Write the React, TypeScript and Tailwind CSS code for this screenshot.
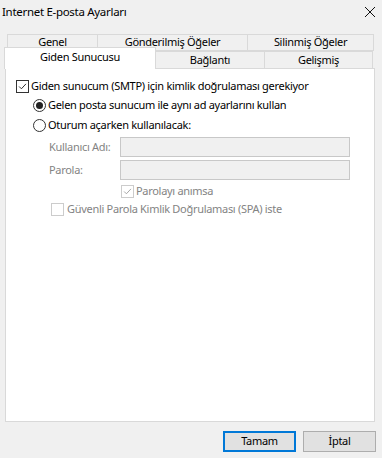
import React from 'react'

const Check = ({ color }: { color: string }) => (
  <svg width="13" height="13" viewBox="0 0 13 13" className="block">
    <path d="M2.5 6.5 L5.2 9.2 L10.6 3.4" fill="none" stroke={color} strokeWidth="1.1" />
  </svg>
)

const Checkbox = ({ checked, disabled }: { checked?: boolean; disabled?: boolean }) => (
  <span
    className={`flex h-[13px] w-[13px] shrink-0 items-center justify-center border bg-white ${
      disabled ? 'border-[#cccccc]' : 'border-[#333333]'
    }`}
  >
    {checked && <Check color={disabled ? '#a0a0a0' : '#222222'} />}
  </span>
)

const Radio = ({ checked }: { checked?: boolean }) => (
  <span className="flex h-[13px] w-[13px] shrink-0 items-center justify-center rounded-full border border-[#333333] bg-white">
    {checked && <span className="h-[7px] w-[7px] rounded-full bg-[#222222]" />}
  </span>
)

const Tab = ({ label, width }: { label: string; width: string }) => (
  <div
    className={`flex h-full items-center justify-center border border-l-0 border-[#d9d9d9] bg-[#f0f0f0] ${width}`}
  >
    {label}
  </div>
)

export default function App() {
  return (
    <div
      className="flex h-[458px] w-[382px] flex-col bg-[#f0f0f0] text-[11px] tracking-[-0.3px] text-black"
      style={{ fontFamily: '"Segoe UI", "Noto Sans", sans-serif' }}
    >
      {/* Title bar */}
      <div className="flex h-[24px] items-center justify-between pl-[2px] pr-[6px]">
        <span className="text-[11.5px]">Internet E-posta Ayarları</span>
        <svg width="12" height="12" viewBox="0 0 12 12">
          <path d="M1 1 L11 11 M11 1 L1 11" stroke="#111" strokeWidth="1" />
        </svg>
      </div>

      {/* Tabs */}
      <div className="ml-[5px] mt-[10px] w-[370px]">
        <div className="ml-[2px] flex h-[17px] border-l border-[#d9d9d9]">
          <Tab label="Genel" width="w-[90px]" />
          <Tab label="Gönderilmiş Öğeler" width="w-[150px]" />
          <Tab label="Silinmiş Öğeler" width="w-[126px]" />
        </div>
        <div className="flex h-[18px] items-end">
          <div className="relative z-10 -ml-[1px] -mt-[3px] flex h-[22px] w-[152px] items-start justify-center border border-b-0 border-[#d9d9d9] bg-white pt-[1px]">
            Giden Sunucusu
          </div>
          <Tab label="Bağlantı" width="w-[109px]" />
          <Tab label="Gelişmiş" width="w-[108px]" />
        </div>

        {/* Panel */}
        <div className="-mt-px flex h-[354px] flex-col border border-[#d9d9d9] bg-white pl-[10px] pt-[10px]">
          <label className="flex h-[14px] items-center gap-[2px]">
            <Checkbox checked />
            <span>Giden sunucum (SMTP) için kimlik doğrulaması gerekiyor</span>
          </label>
          <label className="ml-[17px] mt-[5px] flex h-[14px] items-center gap-[2px]">
            <Radio checked />
            <span>Gelen posta sunucum ile aynı ad ayarlarını kullan</span>
          </label>
          <label className="ml-[17px] mt-[6px] flex h-[14px] items-center gap-[2px]">
            <Radio />
            <span>Oturum açarken kullanılacak:</span>
          </label>

          <div className="mt-[5px] flex items-center text-[#838383]">
            <span className="w-[104px] whitespace-nowrap pl-[33px]">Kullanıcı Adı:</span>
            <div className="h-[20px] w-[230px] border border-[#c8c8c8] bg-[#f0f0f0]" />
          </div>
          <div className="mt-[3px] flex items-center text-[#838383]">
            <span className="w-[104px] whitespace-nowrap pl-[33px]">Parola:</span>
            <div className="h-[20px] w-[230px] border border-[#c8c8c8] bg-[#f0f0f0]" />
          </div>
          <label className="ml-[105px] mt-[4px] flex h-[14px] items-center gap-[2px] text-[#838383]">
            <Checkbox checked disabled />
            <span>Parolayı anımsa</span>
          </label>
          <label className="ml-[35px] mt-[4px] flex h-[14px] items-center gap-[3px] text-[#838383]">
            <Checkbox disabled />
            <span>Güvenli Parola Kimlik Doğrulaması (SPA) iste</span>
          </label>
        </div>
      </div>

      {/* Buttons */}
      <div className="mt-[9px] flex justify-end gap-[7px] pr-[6px]">
        <button className="h-[21px] w-[73px] border-2 border-[#0078d7] bg-[#e1e1e1]">Tamam</button>
        <button className="h-[21px] w-[73px] border border-[#adadad] bg-[#e1e1e1]">İptal</button>
      </div>
    </div>
  )
}
